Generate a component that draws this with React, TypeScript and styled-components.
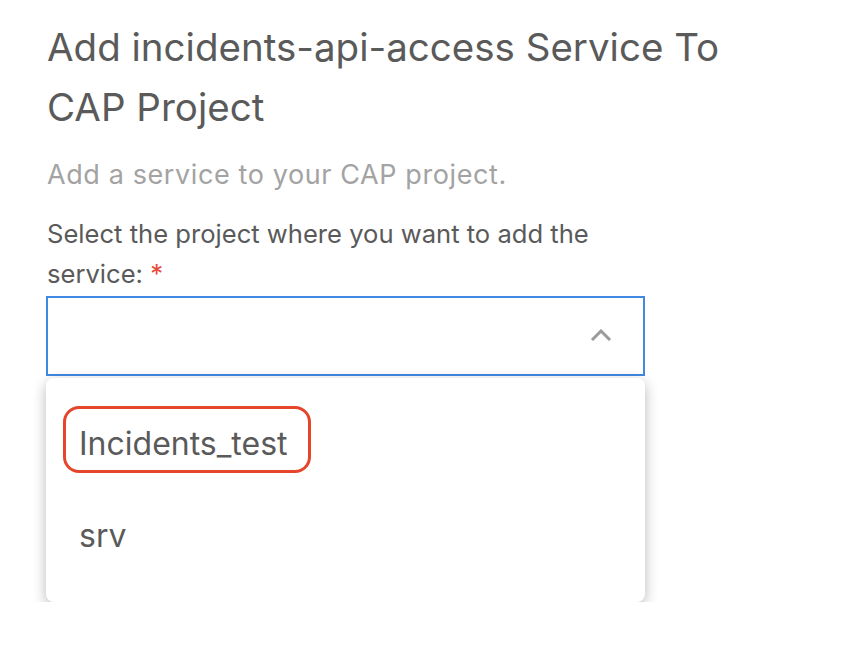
import styled, { createGlobalStyle } from "styled-components";

const GlobalStyle = createGlobalStyle`
  html, body {
    margin: 0;
    padding: 0;
    background: #fff;
  }
  body {
    font-family: Inter, Roboto, "Liberation Sans", sans-serif;
    color: #5a5a5a;
  }
`;

const projects = ["Incidents_test", "srv"];

const App = () => {
  return (
    <>
      <GlobalStyle />
      <Page>
        <Title>Add incidents-api-access Service To CAP Project</Title>
        <Subtitle>Add a service to your CAP project.</Subtitle>
        <Field>
          <Label>
            Select the project where you want to add the service: <Required>*</Required>
          </Label>
          <SelectBox>
            <Chevron width="22" height="12" viewBox="0 0 22 12">
              <path d="M2 11 L11 2 L20 11" fill="none" stroke="#9b9b9b" strokeWidth="3" />
            </Chevron>
          </SelectBox>
          <Menu>
            {projects.map((name, index) => (
              <Option key={name}>
                {index === 0 ? <Marked>{name}</Marked> : name}
              </Option>
            ))}
          </Menu>
        </Field>
      </Page>
    </>
  );
};
export default App;

const Page = styled.div`
  padding: 17px 0 0 47px;
  display: flex;
  flex-direction: column;
`;

const Title = styled.h1`
  margin: 0;
  width: 760px;
  font-size: 38.5px;
  font-weight: 400;
  line-height: 60px;
  color: #5a5a5a;
`;

const Subtitle = styled.p`
  margin: 21px 0 0;
  font-size: 27px;
  line-height: 34px;
  letter-spacing: 0.6px;
  color: #a3a3a3;
`;

const Field = styled.div`
  width: 599px;
  margin-top: 22px;
  margin-left: -1px;
  display: flex;
  flex-direction: column;
`;

const Label = styled.label`
  padding-left: 1px;
  font-size: 25.6px;
  line-height: 40px;
  color: #5a5a5a;
`;

const Required = styled.span`
  color: #e5493a;
`;

const SelectBox = styled.div`
  margin-top: 2px;
  height: 80px;
  box-sizing: border-box;
  border: 2px solid #4189e3;
  display: flex;
  align-items: center;
  justify-content: flex-end;
  padding-right: 31px;
`;

const Chevron = styled.svg`
  display: block;
  margin-top: -2px;
`;

const Menu = styled.div`
  margin-top: 2px;
  padding: 13px 0 19px;
  background: #fff;
  border-radius: 8px;
  box-shadow: 0 4px 14px rgba(0, 0, 0, 0.28);
  display: flex;
  flex-direction: column;
`;

const Option = styled.div`
  height: 96px;
  display: flex;
  align-items: center;
  padding-left: 33px;
  font-size: 32px;
  color: #5a5a5a;
`;

const Marked = styled.span`
  margin-left: -16px;
  padding: 15px 20px 7px 13px;
  border: 3px solid #e5452b;
  border-radius: 16px;
`;
